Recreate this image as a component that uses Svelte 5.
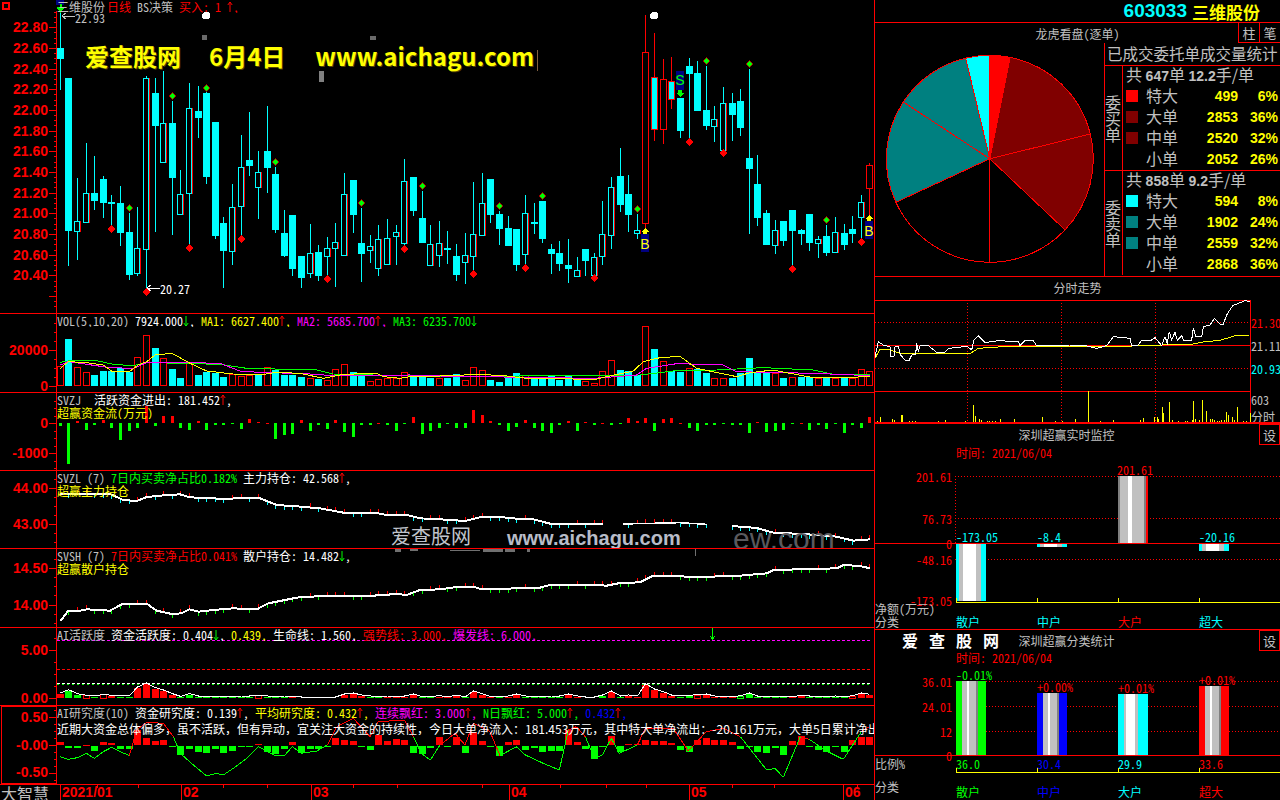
<script>
	const C = { gray: "#c0c0c0", white: "#fff", y: "#ff0", m: "#f0f", g: "#0f0", r: "#f00", b: "#00f", c: "#0ff" };

	const X = (i) => 60.3 + 8.613 * i;
	const px = (i) => Math.floor(X(i));
	const z = (v) => Math.round(v / 3);

	// high, body top, body bottom, low, kind (values in 3x zoomed pixels)
	const candles = [
		[40,145,177,270,"f"],[234,234,692,798,"f"],[534,664,692,780,"h"],[430,580,665,665,"h"],[468,580,603,630,"f"],
		[528,537,608,655,"f"],[585,606,611,680,"f"],[558,609,698,738,"f"],[640,696,825,840,"f"],[620,745,818,828,"h"],
		[228,235,748,870,"h"],[235,279,377,696,"f"],[213,370,485,485,"h"],[303,369,533,705,"f"],[510,583,641,641,"h"],
		[250,325,580,738,"h"],[258,333,353,414,"f"],[270,279,530,552,"f"],[366,366,707,716,"f"],[650,669,752,863,"f"],
		[552,622,752,795,"h"],[405,502,617,710,"h"],[336,480,497,528,"f"],[453,517,560,657,"h"],[318,453,503,578,"f"],
		[500,522,690,698,"f"],[630,699,767,770,"f"],[645,645,806,828,"f"],[768,768,833,863,"f"],[672,760,820,833,"h"],
		[735,756,827,843,"f"],[711,745,767,830,"h"],[668,727,745,860,"h"],[519,583,764,764,"h"],[540,540,644,698,"f"],
		[625,729,761,845,"f"],[705,739,749,790,"h"],[675,718,803,828,"h"],[657,715,791,795,"h"],[675,697,709,795,"h"],
		[478,544,730,740,"h"],[531,531,632,648,"f"],[572,654,728,728,"f"],[675,733,794,794,"h"],[663,730,764,800,"h"],
		[693,744,749,792,"f"],[732,768,825,843,"f"],[699,766,785,851,"h"],[546,703,767,815,"h"],[519,610,705,705,"h"],
		[537,537,645,669,"f"],[633,642,687,735,"f"],[648,684,738,738,"f"],[687,687,795,813,"f"],[585,640,762,797,"h"],
		[609,666,671,702,"f"],[603,603,717,729,"f"],[732,747,762,822,"f"],[723,759,792,813,"f"],[717,795,807,849,"f"],
		[771,811,827,827,"h"],[747,747,783,828,"f"],[759,771,825,825,"h"],[603,703,767,795,"h"],[531,562,705,747,"h"],
		[444,528,615,636,"f"],[525,582,645,696,"f"],[642,690,698,717,"h"],[45,157,670,690,"r"],[99,232,386,423,"x"],
		[177,238,386,432,"r"],[171,244,296,327,"x"],[294,294,393,414,"f"],[174,198,222,420,"f"],[183,219,333,333,"f"],
		[198,330,378,390,"f"],[318,358,377,426,"h"],[261,310,450,450,"h"],[279,309,345,423,"f"],[267,303,384,408,"f"],
		[207,474,507,702,"f"],[465,552,654,678,"f"],[630,639,735,735,"f"],[660,690,735,762,"h"],[663,663,723,738,"f"],
		[630,630,693,800,"f"],[687,690,702,735,"f"],[642,642,729,753,"f"],[708,717,729,774,"h"],[675,708,759,768,"f"],
		[651,696,756,756,"h"],[672,699,735,750,"f"],[648,687,702,729,"f"],[586,607,651,717,"h"],[490,495,563,650,"r"]
	];
	const redDots = [[6,688],[10,877],[15,745],[21,718],[31,838],[40,748],[48,823],[54,805],[62,835],[73,427],[77,460],[85,808],[93,727]];
	const greenDots = [[8,625],[13,289],[17,265],[25,487],[35,609],[42,559],[51,619],[56,589],[67,628],[75,184],[80,193],[89,661]];

	const volTops = [
		168,87,172,187,195,183,183,173,185,140,76,114,145,177,204,160,195,185,188,201,193,198,195,193,170,181,195,195,201,205,207,210,178,163,186,193,214,208,203,205,187,200,200,203,203,
		203,192,210,172,181,210,216,198,189,196,207,203,195,209,195,203,214,220,184,151,180,184,196,49,117,154,184,186,175,178,189,205,205,204,190,144,189,189,190,204,202,201,201,203,203,203,203,203,178,184
	];
	const volRed = new Set([0,2,3,9,10,12,15,20,21,22,24,29,31,32,33,36,37,38,39,40,44,47,48,49,54,61,62,63,64,68,70,73,76,77,83,85,88,90,92,93,94]);

	const join = (a, b) => [...a, ...b.map(([x, y]) => [x + 1320, y])];
	const points = (list, yo) => list.map(([x, y]) => `${x / 3},${yo + y / 3}`).join(" ");

	const maYellow = join(
		[[181,175],[205,155],[260,158],[310,165],[335,183],[390,183],[415,165],[440,155],[465,135],[515,130],[540,143],[570,160],[620,183],[700,192],[780,195],[830,187],[900,190],[970,205],[1030,193],[1130,190],[1150,200],[1200,205],[1240,198]],
		[[0,198],[120,193],[200,198],[260,205],[360,205],[460,210],[500,200],[580,183],[610,155],[660,143],[720,139],[770,175],[890,200],[930,188],[1000,180],[1050,190],[1120,203],[1230,203],[1290,198]]
	);
	const maPink = join(
		[[181,165],[205,155],[330,173],[400,175],[440,158],[530,157],[660,160],[720,183],[790,188],[900,190],[1000,197],[1230,195]],
		[[0,198],[120,200],[460,205],[590,195],[620,175],[710,161],[850,165],[890,185],[1120,190],[1290,197]]
	);
	const maGreen = join(
		[[181,157],[205,153],[290,152],[340,163],[400,167],[440,157],[530,160],[660,163],[740,175],[950,180],[1000,192]],
		[[0,200],[600,195],[700,183],[830,180],[970,173],[1120,180],[1180,193],[1290,193]]
	);

	const flow = [
		-10,-122,7,-20,-5,10,-14,-50,-24,-14,52,-10,22,22,-14,-22,7,-20,-5,-5,-1,-17,13,4,1,-47,-35,-32,10,-23,-5,-17,10,-26,-41,-5,-5,1,-5,-25,-1,19,-34,-23,-14,
		-3,-14,-14,38,25,7,-7,-23,-11,10,-14,-23,-31,-7,7,-25,4,-5,1,-7,-2,16,7,16,-23,13,16,1,-16,-25,-5,-7,-2,-5,-5,-31,4,-28,-25,-22,-2,1,-20,-7,-17,-2,-29,-7,-14,19
	];

	const mainLine = join(
		[[181,552],[330,552],[370,570],[410,573],[440,561],[490,556],[540,553],[570,562],[680,567],[730,563],[775,563],[830,585],[890,589],[960,595],[1030,608],[1130,609],[1160,615],[1220,615],[1260,625]],
		[[0,628],[75,633],[120,622],[180,621],[230,626],[280,628],[330,641],[490,643]]
	);
	const mainLine2 = [[550,642],[720,638],[800,643]].map(([x, y]) => [x + 1320, y]);
	const mainLine3 = [[875,648],[950,654],[1000,668],[1090,672],[1190,680],[1240,692],[1290,688]].map(([x, y]) => [x + 1320, y]);
	const retailLine = join(
		[[181,228],[205,197],[240,197],[260,193],[330,197],[365,178],[440,176],[470,197],[515,207],[545,205],[568,193],[595,200],[640,195],[700,190],[770,193],[805,175],[880,160],[910,155],[1120,152],[1190,147],[1220,150],[1260,135]],
		[[0,133],[50,126],[100,125],[125,133],[300,128],[330,120],[460,120],[500,122],[540,114],[600,112],[640,92],[720,93],[750,97],[900,92],[980,85],[1000,75],[1190,70],[1210,60],[1260,63],[1290,70]]
	);

	function yAt(list, x) {
		for (let k = 1; k < list.length; k++) {
			const [x0, y0] = list[k - 1];
			const [x1, y1] = list[k];
			if (x >= x0 && x <= x1) return y0 + ((y1 - y0) * (x - x0)) / (x1 - x0 || 1);
		}
		return null;
	}
	function marks(list, yo, downColor) {
		const out = [];
		candles.forEach((c, i) => {
			const y = yAt(list, X(i) * 3);
			if (y === null) return;
			const up = c[4] !== "f";
			out.push({ x: px(i) + 0.5, y1: yo + y / 3, y2: yo + y / 3 + (up ? -4 : 4), color: up ? C.r : downColor });
		});
		return out;
	}
	const mainMarks = [mainLine, mainLine2, mainLine3].flatMap((l) => marks(l, 310, C.c));
	const retailMarks = marks(retailLine, 545, C.g);

	const activity = [
		12,-22,-10,5,-3,8,5,-4,-4,30,42,28,21,10,-2,-10,-3,-3,-3,-1,-2,-3,-3,5,-3,-1,-3,3,0,0,0,0,0,9,12,6,-3,-1,3,3,3,9,-1,-1,4,
		1,5,-1,18,10,1,-1,3,9,-3,-1,-1,-3,-3,9,3,0,0,-6,18,-3,6,3,40,24,16,6,-3,-5,7,9,3,1,1,-4,-12,-3,-3,-3,-1,1,5,-3,-3,-1,-3,-1,4,12,8
	];
	const activityHollow = new Set([3,5,23,74,79,92]);
	const activityLine = activity.map((h, i) => `${px(i) + 0.5},${697 - Math.abs(h) / 3}`).join(" ");

	const study = [
		10,-5,-5,1,-14,9,6,-10,-10,45,22,12,14,-4,-26,-10,-17,-20,-10,-22,-14,-3,-3,3,-17,-23,-10,8,-22,-10,-10,-3,20,14,11,-4,-12,30,12,18,14,-20,-23,-5,25,
		-3,25,-22,40,12,-3,-30,10,14,-13,-5,-18,-15,-15,45,8,-10,-38,-2,26,-18,3,3,14,12,12,7,-13,-17,14,20,14,14,8,-10,-3,-17,-20,-5,-28,12,26,-4,-11,-17,-3,-17,14,24,24
	];
	const studyLine = join(
		[[181,635],[205,643],[232,638],[259,625],[283,640],[310,620],[335,607],[361,620],[388,632],[410,555],[440,532],[490,535],[520,575],[541,625],[580,660],[620,693],[650,685],[670,690],[700,670],[740,640],[775,605],[825,632],[853,632],[877,605],[904,625],[950,618],[982,600],[1010,545],[1060,520],[1110,575],[1135,530],[1213,525],[1240,575],[1264,625],[1291,645]],
		[[0,600],[45,565],[75,600],[100,535],[150,560],[180,632],[229,605],[256,630],[310,655],[358,675],[385,555],[409,545],[436,575],[463,640],[487,630],[514,580],[538,625],[592,600],[616,550],[700,550],[745,618],[799,560],[850,550],[901,575],[980,675],[1005,670],[1030,697],[1081,575],[1108,583],[1159,618],[1210,643],[1264,560],[1288,545]]
	);
	const studySegs = studyLine.slice(1).map((p, k) => ({
		a: studyLine[k],
		b: p,
		color: (p[1] + studyLine[k][1]) / 2 < 600 ? C.r : C.g
	}));

	// axis labels with y position
	const axes = {
		main: ["22.80","22.60","22.40","22.20","22.00","21.80","21.60","21.40","21.20","21.00","20.80","20.60","20.40"].map((t, i) => [t, 27.3 + i * 20.67]),
		vol: [["20000",350],["0",386]],
		zj: [["0",423],["-1000",453]],
		zl: [["44.00",488],["43.00",524]],
		sh: [["14.50",567.7],["14.00",604.5]],
		act: [["5.00",650],["0.00",698]],
		res: [["0.50",717],["-0.00",745],["-0.50",772]]
	};
	function ticks(list, top, bottom) {
		const step = list[1][1] - list[0][1];
		const out = [];
		const y0 = list[0][1];
		for (let k = -8; k < 64; k++) {
			const y = Math.round(y0 + (k * step) / 4);
			if (y > top + 1 && y < bottom) out.push({ y, major: k % 4 === 0 });
		}
		return out;
	}
	const panels = [
		{ key: "vol", top: 314, h: 79, a: axes.vol },
		{ key: "zj", top: 393, h: 78, a: axes.zj },
		{ key: "zl", top: 471, h: 78, a: axes.zl },
		{ key: "sh", top: 549, h: 79, a: axes.sh },
		{ key: "act", top: 628, h: 78, a: axes.act },
		{ key: "res", top: 706, h: 79, a: axes.res }
	];

	const mainHead = [["三维股份",C.gray],["日线 ",C.r,2],["BS决策 ",C.gray],["买入: 1 ",C.r],["^"],[",",C.r]];
	const volHead = [["VOL(5,10,20) ",C.gray],["7924.000",C.white],["v"],[", ",C.white],["MA1: 6627.400",C.y],["^"],[", ",C.y],["MA2: 5685.700",C.m],["^"],[", ",C.m],["MA3: 6235.700",C.g],["v"]];
	const zjHead = [["SVZJ  ",C.gray],["活跃资金进出: 181.452",C.white,1],["^"],[",",C.white]];
	const zlHead = [["SVZL (7) ",C.gray],["7日内买卖净占比0.182%",C.g],[" 主力持仓: 42.568",C.white],["^"],[",",C.white]];
	const shHead = [["SVSH (7) ",C.gray],["7日内买卖净占比0.041%",C.r],[" 散户持仓: 14.482",C.white],["v"],[",",C.white]];
	const actHead = [["AI活跃度 ",C.gray],["资金活跃度: 0.404",C.white],["v"],[", ",C.white],["0.439, ",C.y],["生命线: 1.560, ",C.white],["强势线: 3.000, ",C.r],["爆发线: 6.000,",C.m]];
	const resHead = [["AI研究度(10) ",C.gray],["资金研究度: 0.139",C.white],["^"],[", ",C.white],["平均研究度: 0.432",C.y],["^"],[", ",C.y],["连续飘红: 3.000",C.m],["^"],[", ",C.m],["N日飘红: 5.000",C.g],["^"],[", ",C.g],["0.432",C.b],["^"],[",",C.b]];

	const dateLabels = [["2021/01",60],["02",181],["03",311],["04",509],["05",689],["06",843]];
	const dateMinor = [97,138,223,267,353,397,482,560,606,646,732,774,857];
	const scraps = [[395,549,6,3],[410,549,8,2],[450,550,30,1],[483,549,20,3],[505,549,10,3],[527,549,3,3],[695,549,1,7]];

	// pie
	const buy = [[499,C.r],[2853,"#800000"],[2520,"#800000"],[2052,"#000"]];
	const sell = [[2868,"#000"],[2559,"#008080"],[1902,"#008080"],[594,C.c]];
	const R = 103.5;
	const CX = 989.8;
	const CY = 159.8;
	const polar = (a) => [CX + R * Math.sin((a * Math.PI) / 180), CY - R * Math.cos((a * Math.PI) / 180)];
	function slices(list, start) {
		const total = list.reduce((s, v) => s + v[0], 0);
		let a = start;
		return list.map(([v, fill]) => {
			const from = a;
			a += (v / total) * 180;
			const [x0, y0] = polar(from);
			const [x1, y1] = polar(a);
			return { d: `M${CX} ${CY}L${x0} ${y0}A${R} ${R} 0 0 1 ${x1} ${y1}Z`, fill };
		});
	}
	const pie = [...slices(buy, 0), ...slices(sell, 180)];

	const buyRows = [["特大","499","6%",C.r],["大单","2853","36%","#800000"],["中单","2520","32%","#800000"],["小单","2052","26%",""]];
	const sellRows = [["特大","594","8%",C.c],["大单","1902","24%","#008080"],["中单","2559","32%","#008080"],["小单","2868","36%",""]];

	const tsPrice = [[15,245],[25,200],[40,210],[60,215],[62,243],[72,243],[75,215],[85,215],[92,240],[105,255],[118,255],[125,240],[137,238],[140,205],[145,230],[150,212],[175,212],[200,232],[225,232],[235,220],[260,218],[290,213],[305,225],[312,195],[325,182],[345,203],[385,197],[445,200],[450,212],[465,197],[490,197],[500,213],[600,210],[640,210],[680,220],[710,212],[730,185],[780,190],[785,212],[805,210],[815,195],[845,195],[855,188],[875,212],[885,185],[892,205],[898,170],[905,195],[915,172],[922,195],[935,182],[940,195],[965,195],[970,160],[978,185],[995,185],[1000,155],[1020,150],[1033,130],[1050,147],[1060,147],[1070,120],[1088,92],[1125,77],[1140,80]];
	const tsAvg = [[15,250],[30,222],[60,225],[90,235],[130,236],[300,236],[325,220],[385,216],[730,215],[875,210],[965,208],[1000,201],[1050,196],[1100,181],[1140,180]];
	const tsVol = [[20,2],[31,14],[65,10],[72,7],[93,22],[97,22],[118,2],[125,4],[135,3],[205,2],[226,6],[285,2],[310,50],[316,18],[328,10],[334,5],[351,2],[358,2],[365,2],[375,2],[391,8],[433,10],[515,14],[555,3],[575,2],[616,10],[655,92],[690,3],[730,5],[810,5],[820,12],[853,14],[860,14],[865,8],[877,44],[880,28],[898,60],[905,5],[923,2],[945,3],[950,2],[965,6],[970,63],[975,10],[988,5],[997,66],[1009,32],[1021,8],[1027,8],[1033,5],[1040,3],[1047,4],[1054,5],[1061,7],[1068,30],[1075,20],[1085,16],[1092,6],[1102,44],[1120,3],[1128,2],[1140,28]];
	const tsPts = (list) => list.map(([x, y]) => `${870 + x / 3},${275 + y / 3}`).join(" ");

	const S = C.gray;
	const G = "#808080";
	const W = C.white;
	const coolStrip = [[0,3,C.c],[3,7,S],[7,20,W],[20,25,S],[25,30,C.c]];
	const netBars = [
		{ x: 956, y: 543, h: 57, strip: coolStrip, val: "-173.05", vy: 535, vc: C.c, name: "散户", nc: C.c },
		{ x: 1037, y: 543, h: 3, strip: coolStrip, val: "-8.4", vy: 535, vc: C.c, name: "中户", nc: C.c },
		{ x: 1118, y: 475, h: 67, strip: [[0,2,G],[2,10,S],[10,14,W],[14,26,S],[26,28,G],[28,30,C.r]], val: "201.61", vy: 468, vc: C.r, name: "大户", nc: C.r },
		{ x: 1199, y: 543, h: 7, strip: coolStrip, val: "-20.16", vy: 535, vc: C.c, name: "超大", nc: C.c }
	];
	const warm = (c) => [[0,6,c],[6,11,S],[11,13,W],[13,20,S],[20,22,G],[22,30,c]];
	const shareBars = [
		{ x: 956, y: 681, strip: warm(C.g), pct: "-0.01%", py: 674, pc: C.g, val: "36.0", name: "散户", c: C.g },
		{ x: 1037, y: 693, strip: warm(C.b), pct: "+0.00%", py: 686, pc: C.r, val: "30.4", name: "中户", c: C.b },
		{ x: 1118, y: 694, strip: [[0,6,C.c],[6,8,S],[8,17,W],[17,20,S],[20,30,C.c]], pct: "+0.01%", py: 687, pc: C.r, val: "29.9", name: "大户", c: C.c },
		{ x: 1199, y: 686, strip: warm(C.r), pct: "+0.01%", py: 679, pc: C.r, val: "33.6", name: "超大", c: C.r }
	];
</script>

{#snippet line(segs)}
	<div class="hline">
		{#each segs as s}
			{#if s[0] === "^"}
				<svg class="arr up" width="6" height="12" viewBox="0 0 6 12"><path d="M3 1V11M.8 4L3 1L5.2 4" /></svg>
			{:else if s[0] === "v"}
				<svg class="arr dn" width="6" height="12" viewBox="0 0 6 12"><path d="M3 1V11M.8 8L3 11L5.2 8" /></svg>
			{:else}
				<span style="color:{s[1]};margin-left:{s[2] || 0}px">{s[0]}</span>
			{/if}
		{/each}
	</div>
{/snippet}

{#snippet axis(list, top, bottom)}
	{#each ticks(list, top, bottom) as t}
		<rect x={t.major ? 49 : 54} y={t.y} width={t.major ? 7 : 2} height="1" fill={C.r} />
	{/each}
	{#each list as [t, y]}
		<text class="ax" x="48" {y} text-anchor="end">{t}</text>
	{/each}
{/snippet}

{#snippet strips(b, h)}
	{#each b.strip as [from, to, c]}
		<rect x={b.x + from} y={b.y} width={to - from} height={h} fill={c} />
	{/each}
{/snippet}

<div class="screen">
	<div class="left">
		<section class="panel main">
			<svg width="874" height="313" viewBox="0 0 874 313">
				<rect x="3" y="3" width="6" height="6" fill="none" stroke={C.r} stroke-width="2" />
				{@render axis(axes.main, 10, 312)}
				{#each candles as c, i}
					{@const x = px(i)}
					{@const color = c[4] === "r" || c[4] === "x" ? C.r : C.c}
					<rect x={x} y={z(c[0])} width="1" height={z(c[3]) - z(c[0])} fill={color} />
					{#if c[4] === "f"}
						<rect x={x - 3} y={z(c[1])} width="7" height={Math.max(1, z(c[2]) - z(c[1]))} fill={C.c} />
					{:else if c[4] === "h"}
						<rect x={x + 3} y={z(c[1])} width="1" height={z(c[2]) - z(c[1]) + 1} fill={C.r} />
						<rect x={x - 2.5} y={z(c[1]) + 0.5} width="5" height={z(c[2]) - z(c[1])} fill="#000" stroke={C.c} />
					{:else if c[4] === "r"}
						<rect x={x - 2.5} y={z(c[1]) + 0.5} width="6" height={z(c[2]) - z(c[1])} fill="#000" stroke={C.r} />
					{:else}
						<rect x={x - 2.5} y={z(c[1]) + 0.5} width="6" height={z(c[2]) - z(c[1])} fill={C.c} stroke={C.r} />
					{/if}
				{/each}
				{#each redDots as [i, y]}
					<polygon points="{px(i) + 0.5},{z(y) - 4} {px(i) + 4.5},{z(y)} {px(i) + 0.5},{z(y) + 4} {px(i) - 3.5},{z(y)}" fill={C.r} />
				{/each}
				{#each greenDots as [i, y]}
					<polygon points="{px(i) + 0.5},{z(y) - 4} {px(i) + 4.5},{z(y)} {px(i) + 0.5},{z(y) + 4} {px(i) - 3.5},{z(y)}" fill="#900" />
					<polygon points="{px(i) + 0.5},{z(y) - 3} {px(i) + 3.5},{z(y)} {px(i) + 0.5},{z(y) + 3} {px(i) - 2.5},{z(y)}" fill={C.g} />
				{/each}

				<rect x="202" y="35" width="5" height="5" fill="#6a6a6a" />
				<rect x="370" y="36" width="6" height="4" fill="#6a6a6a" />
				<rect x="319" y="71" width="5" height="11" fill="#808080" />
				<rect x="537" y="50" width="1" height="21" fill="#806040" />
				{#each [206, 654] as x}
					<polygon points="{x - 2},12 {x + 2},12 {x + 4},14 {x + 4},18 {x + 2},19 {x - 2},19 {x - 4},18 {x - 4},14" fill={C.white} />
				{/each}

				<rect x="56" y="0" width="8" height="5" fill="#000080" />
				<path d="M60.5 4V11M57.5 7.5L60.5 11L63.5 7.5" stroke={C.g} stroke-width="2" fill="none" />
				<path d="M62 16H75M62 16L66 13M62 16L66 19" stroke={C.gray} fill="none" />
				<text class="small" x="75" y="17" fill={C.gray}>22.93</text>
				<path d="M147 288H160M147 288L151 285M147 288L151 291" stroke={C.white} fill="none" />
				<text class="small" x="160" y="288.5" fill={C.white}>20.27</text>

				<rect x="641" y="234" width="8" height="18" fill="#000080" />
				<polygon points="645,228 649,232 647,232 647,234 643,234 643,232 641,232" fill={C.y} />
				<text class="mark" x="645" y="244" fill={C.y}>B</text>
				<rect x="865" y="221" width="8" height="18" fill="#000080" />
				<polygon points="869,215 873,219 871,219 871,221 867,221 867,219 865,219" fill={C.y} />
				<text class="mark" x="869" y="231" fill={C.y}>B</text>
				<rect x="676" y="71" width="8" height="19" fill="#000080" />
				<text class="mark" x="680" y="80" fill={C.g}>S</text>
				<polygon points="678,90 682,90 682,93 684,93 680,97 676,93 678,93" fill={C.g} />
			</svg>
			<div class="head">{@render line(mainHead)}</div>
			<div class="stamp">
				<span>爱查股网</span><span class="s2">6月4日</span><span class="s3">www.aichagu.com</span>
			</div>
		</section>

		{#each panels as p}
			<section class="panel" style="height:{p.h}px">
				<svg width="874" height={p.h - 1} viewBox="0 {p.top} 874 {p.h - 1}">
					{#if p.key === "res"}
						<rect x="1.5" y="706.5" width="55" height="77" fill="none" stroke={C.r} />
					{/if}
					{@render axis(p.a, p.top, p.top + p.h - 1)}

					{#if p.key === "vol"}
						{#each volTops as t, i}
							{#if volRed.has(i)}
								<rect x={px(i) - 2.5} y={310 + z(t) + 0.5} width="6" height={385 - 310 - z(t)} fill="none" stroke={C.r} />
							{:else}
								<rect x={px(i) - 3} y={310 + z(t)} width="7" height={386 - 310 - z(t)} fill={C.c} />
							{/if}
						{/each}
						<polyline points={points(maGreen, 310)} fill="none" stroke={C.g} />
						<polyline points={points(maPink, 310)} fill="none" stroke={C.m} />
						<polyline points={points(maYellow, 310)} fill="none" stroke={C.y} />
					{:else if p.key === "zj"}
						{#each flow as v, i}
							<rect x={px(i) - 1} y={v > 0 ? 423 - z(v) : 423} width="3" height={Math.max(1, z(Math.abs(v)))} fill={v > 0 ? C.r : C.g} />
						{/each}
					{:else if p.key === "zl"}
						{#each mainMarks as m}
							<line x1={m.x} x2={m.x} y1={m.y1} y2={m.y2} stroke={m.color} />
						{/each}
						<polyline points={points(mainLine, 310)} class="thick" />
						<polyline points={points(mainLine2, 310)} class="thin" />
						<polyline points={points(mainLine3, 310)} class="thick" />
						<text class="wm1" x="391" y="537">爱查股网</text>
						<text class="wm2" x="507" y="538">www.aichagu.com</text>
						<text class="wm3" x="733" y="538">ew.com</text>
					{:else if p.key === "sh"}
						{#each scraps as [x, y, w, h]}
							<rect {x} {y} width={w} height={h} fill="#707070" />
						{/each}
						{#each retailMarks as m}
							<line x1={m.x} x2={m.x} y1={m.y1} y2={m.y2} stroke={m.color} />
						{/each}
						<polyline points={points(retailLine, 545)} class="thick" />
					{:else if p.key === "act"}
						<line x1="57" x2="872" y1="640.5" y2="640.5" stroke={C.m} stroke-dasharray="3 2" />
						<line x1="57" x2="872" y1="669.5" y2="669.5" stroke={C.r} stroke-dasharray="3 2" />
						<line x1="57" x2="872" y1="683.5" y2="683.5" stroke={C.white} stroke-dasharray="3 2" />
						<line x1="57" x2="872" y1="684.5" y2="684.5" stroke={C.g} stroke-dasharray="2 3" />
						{#each activity as v, i}
							{#if activityHollow.has(i)}
								<rect x={px(i) - 2.5} y={698.5 - z(Math.abs(v)) - 1} width="6" height={z(Math.abs(v)) + 1} fill="none" stroke={v > 0 ? C.r : C.g} />
							{:else if v !== 0}
								<rect x={px(i) - 3} y={698 - Math.max(1, z(Math.abs(v)))} width="7" height={Math.max(1, z(Math.abs(v)))} fill={v > 0 ? C.r : C.g} />
							{/if}
						{/each}
						<polyline points={activityLine} fill="none" stroke={C.white} />
						<path d="M712.5 628V639M710 636L712.5 639L715 636" stroke={C.g} fill="none" />
					{:else if p.key === "res"}
						{#each study as v, i}
							<rect x={px(i) - 3} y={v > 0 ? 745 - z(v) : 746} width="7" height={Math.max(1, z(Math.abs(v)))} fill={v > 0 ? C.r : C.g} />
						{/each}
						{#each studySegs as s}
							<line x1={s.a[0] / 3} y1={545 + s.a[1] / 3} x2={s.b[0] / 3} y2={545 + s.b[1] / 3} stroke={s.color} />
						{/each}
					{/if}
				</svg>

				<div class="head">
					{#if p.key === "vol"}
						{@render line(volHead)}
					{:else if p.key === "zj"}
						{@render line(zjHead)}
						<div class="note">超赢资金流(万元)</div>
					{:else if p.key === "zl"}
						{@render line(zlHead)}
						<div class="note">超赢主力持仓</div>
					{:else if p.key === "sh"}
						{@render line(shHead)}
						<div class="note">超赢散户持仓</div>
					{:else if p.key === "act"}
						{@render line(actHead)}
					{:else}
						{@render line(resHead)}
						<div class="msg">近期大资金总体偏多，虽不活跃，但有异动，宜关注大资金的持续性，今日大单净流入：181.453万元，其中特大单净流出：-20.161万元，大单5日累计净出</div>
					{/if}
				</div>
			</section>
		{/each}

		<div class="dates">
			<span class="brand">大智慧</span>
			<svg width="874" height="15" viewBox="0 785 874 15">
				{#each dateLabels as [t, x]}
					<rect {x} y="785" width="1" height="15" fill={C.r} />
					<text class="date" x={x + 2} y="792">{t}</text>
				{/each}
				{#each dateMinor as x}
					<rect {x} y="785" width="1" height="3" fill={C.r} />
				{/each}
			</svg>
		</div>
	</div>

	<div class="right">
		<header class="quote"><span class="code">603033</span> <span class="name">三维股份</span></header>

		<section class="dragon">
			<div class="bar">
				<span class="bar-title">龙虎看盘(逐单)</span>
				<span class="cell">柱</span>
				<span class="cell">笔</span>
			</div>
			<div class="dragon-body">
				<svg width="229" height="233" viewBox="875 44 229 233">
					{#each pie as s}
						<path d={s.d} fill={s.fill} stroke={C.r} />
					{/each}
				</svg>
				<div class="stats">
					<div class="stats-head">已成交委托单成交量统计</div>
					<div class="side">
						<div class="side-label"><span>委</span><span>买</span><span>单</span></div>
						<div class="rows">
							<div class="total">共 <b>647</b>单 <b>12.2</b>手/单</div>
							{#each buyRows as r}
								<div class="row">
									<span class="swatch" style="background:{r[3]}"></span>
									<span>{r[0]}</span><b>{r[1]}</b><b>{r[2]}</b>
								</div>
							{/each}
						</div>
					</div>
					<div class="side last">
						<div class="side-label"><span>委</span><span>卖</span><span>单</span></div>
						<div class="rows">
							<div class="total">共 <b>858</b>单 <b>9.2</b>手/单</div>
							{#each sellRows as r}
								<div class="row">
									<span class="swatch" style="background:{r[3]}"></span>
									<span>{r[0]}</span><b>{r[1]}</b><b>{r[2]}</b>
								</div>
							{/each}
						</div>
					</div>
				</div>
			</div>
		</section>

		<section class="trend">
			<div class="title">分时走势</div>
			<svg width="405" height="122" viewBox="875 300 405 122">
				<rect x="875" y="300" width="375" height="1" fill={C.r} />
				<rect x="875" y="345" width="375" height="1" fill={C.r} />
				<rect x="875" y="391" width="375" height="1" fill={C.r} />
				<rect x="1250" y="300" width="1" height="122" fill={C.r} />
				{#each [322.5, 368.5] as y}
					<line x1="875" x2="1250" y1={y} y2={y} stroke={C.r} stroke-dasharray="1 2" />
				{/each}
				{#each [967.5, 1061.5, 1155.5] as x}
					<line x1={x} x2={x} y1="300" y2="422" stroke={C.r} stroke-dasharray="1 2" />
				{/each}
				{#each tsVol as [x, h]}
					<rect x={870 + z(x)} y={422 - z(h)} width="1" height={z(h)} fill={C.y} />
				{/each}
				<polyline points={tsPts(tsAvg)} fill="none" stroke={C.y} />
				<polyline points={tsPts(tsPrice)} fill="none" stroke={C.white} />
				<text x="1251" y="322" fill={C.r}>21.30</text>
				<text x="1251" y="345" fill={C.gray}>21.11</text>
				<text x="1251" y="368" fill={C.c}>20.93</text>
				<text x="1251" y="399" fill={C.gray}>603</text>
				<text x="1251" y="416" fill={C.gray}>分时</text>
			</svg>
		</section>

		<section class="monitor">
			<div class="bar tall">
				<span class="bar-title">深圳超赢实时监控</span>
				<span class="set">设</span>
			</div>
			<svg width="405" height="185" viewBox="875 444 405 185">
				<text x="956" y="451" fill={C.r}>时间: 2021/06/04</text>
				{#each [475.5, 517.5, 558.5] as y}
					<line x1="955" x2="1280" y1={y} y2={y} stroke={C.r} stroke-dasharray="1 2" />
				{/each}
				<line x1="955.5" x2="955.5" y1="475" y2="542" stroke={C.r} stroke-dasharray="1 2" />
				{#each [["201.61",475],["76.73",517],["0",542],["-48.16",558],["-173.05",599]] as [t, y]}
					<text x="952" {y} text-anchor="end" fill={C.r}>{t}</text>
				{/each}
				{#each netBars as b}
					{@render strips(b, b.h)}
					<text x={b.x + (b.val === "201.61" ? -1 : 0)} y={b.vy} fill={b.vc}>{b.val}</text>
					<text x={b.x} y="620" fill={b.nc}>{b.name}</text>
					<rect x={b.x} y="597" width="1" height="4" fill={C.y} />
				{/each}
				<rect x="875" y="542" width="405" height="1" fill={C.r} />
				<rect x="956" y="601" width="324" height="1" fill={C.y} />
				<text x="875" y="607" fill={C.gray}>净额(万元)</text>
				<text x="875" y="620" fill={C.gray}>分类</text>
			</svg>
		</section>

		<section class="category">
			<div class="bar tall">
				<span class="brand-name">爱 查 股 网</span>
				<span class="bar-title">深圳超赢分类统计</span>
				<span class="set">设</span>
			</div>
			<svg width="405" height="149" viewBox="875 651 405 149">
				<text x="956" y="657" fill={C.r}>时间: 2021/06/04</text>
				{#each [681.5, 706.5, 731.5] as y}
					<line x1="956" x2="1280" y1={y} y2={y} stroke={C.r} stroke-dasharray="1 2" />
				{/each}
				{#each [["36.01",681],["24.01",706],["12",731],["0",755]] as [t, y]}
					<text x="952" {y} text-anchor="end" fill={C.r}>{t}</text>
				{/each}
				{#each shareBars as b}
					{@render strips(b, 755 - b.y)}
					<text x={b.x} y={b.py} fill={b.pc}>{b.pct}</text>
					<text x={b.x} y="763" fill={b.c}>{b.val}</text>
					<text x={b.x} y="791" fill={b.c}>{b.name}</text>
					<rect x={b.x} y="768" width="1" height="5" fill={C.y} />
				{/each}
				<rect x="875" y="755" width="405" height="1" fill={C.r} />
				<rect x="956" y="772" width="324" height="1" fill={C.y} />
				<text x="875" y="763" fill={C.gray}>比例%</text>
				<text x="875" y="786" fill={C.gray}>分类</text>
			</svg>
		</section>
	</div>
</div>

<style>
	:global(body) {
		background: #000;
	}
	.screen {
		display: flex;
		width: 1280px;
		height: 800px;
		overflow: hidden;
		background: #000;
		color: #c0c0c0;
		font-family: "Noto Sans CJK SC", monospace;
		font-size: 12px;
		line-height: 13px;
		font-feature-settings: "hwid";
	}
	svg {
		display: block;
		shape-rendering: crispEdges;
	}
	svg text {
		dominant-baseline: central;
	}
	.left {
		position: relative;
		width: 874px;
		border-right: 1px solid #f00;
		flex: none;
	}
	.left::before {
		content: "";
		position: absolute;
		left: 56px;
		top: 11px;
		bottom: 16px;
		width: 1px;
		background: #f00;
		z-index: 2;
	}
	.panel {
		position: relative;
		border-bottom: 1px solid #f00;
		box-sizing: border-box;
		overflow: hidden;
	}
	.main {
		height: 314px;
	}
	.head {
		position: absolute;
		left: 57px;
		top: 0;
		width: 817px;
		overflow: hidden;
		white-space: nowrap;
	}
	.hline {
		display: flex;
		height: 13px;
		align-items: center;
	}
	.hline span {
		white-space: pre;
	}
	.note {
		color: #ff0;
	}
	.msg {
		margin-top: 3px;
		color: #fff;
		font-feature-settings: normal;
	}
	.arr {
		flex: none;
		fill: none;
		shape-rendering: auto;
	}
	.arr.up {
		stroke: #f00;
	}
	.arr.dn {
		stroke: #0f0;
	}
	.ax {
		font: bold 14px "Liberation Sans", sans-serif;
		fill: #f00;
	}
	.small {
		font-size: 12px;
	}
	.mark {
		font: 14px "Liberation Sans", sans-serif;
		text-anchor: middle;
	}
	.stamp {
		position: absolute;
		left: 85px;
		top: 39px;
		display: flex;
		color: #ff0;
		font-size: 24px;
		line-height: 34px;
		font-weight: 700;
		font-feature-settings: normal;
		text-shadow: 1px 1px 0 #554400;
		white-space: nowrap;
	}
	.s2 {
		margin-left: 28px;
	}
	.s3 {
		margin-left: 30px;
	}
	.thick {
		fill: none;
		stroke: #fff;
		stroke-width: 2;
	}
	.thin {
		fill: none;
		stroke: #fff;
		stroke-width: 1.5;
	}
	.wm1 {
		font: 20px "Liberation Serif", "Noto Sans CJK SC", serif;
		fill: #c0c4cc;
	}
	.wm2 {
		font: bold 20px "Liberation Sans", sans-serif;
		fill: #b8bcc8;
	}
	.wm3 {
		font: 30px "Liberation Sans", sans-serif;
		fill: #5a5a5e;
	}
	.dates {
		position: relative;
		height: 15px;
	}
	.brand {
		position: absolute;
		left: 1px;
		top: 0;
		font-size: 16px;
		line-height: 16px;
		color: #c0c0c0;
	}
	.date {
		font: bold 14px "Liberation Sans", sans-serif;
		fill: #f00;
	}
	.right {
		flex: 1;
		display: flex;
		flex-direction: column;
		min-width: 0;
	}
	.quote {
		height: 22px;
		box-sizing: border-box;
		display: flex;
		align-items: center;
		justify-content: flex-end;
		gap: 5px;
		padding-right: 20px;
		font-weight: 700;
		font-feature-settings: normal;
	}
	.code {
		color: #0ff;
		font: bold 19px "Liberation Sans", sans-serif;
	}
	.name {
		color: #ff0;
		font-size: 17px;
	}
	.dragon {
		border-top: 1px solid #f00;
		border-bottom: 1px solid #f00;
		height: 255px;
		box-sizing: border-box;
	}
	.bar {
		position: relative;
		display: flex;
		justify-content: flex-end;
		height: 20px;
	}
	.bar.tall {
		height: 21px;
	}
	.bar-title {
		position: absolute;
		left: 0;
		right: 0;
		top: 4px;
		text-align: center;
	}
	.tall .bar-title {
		right: 22px;
		top: 4px;
	}
	.cell {
		position: relative;
		width: 20px;
		border-left: 1px solid #f00;
		border-bottom: 1px solid #f00;
		text-align: center;
		line-height: 20px;
		font-size: 13px;
	}
	.set {
		position: absolute;
		right: 0;
		top: 0;
		width: 19px;
		height: 19px;
		border: 1px solid #f00;
		text-align: center;
		line-height: 19px;
		font-size: 13px;
	}
	.dragon-body {
		display: flex;
		height: 233px;
	}
	.stats {
		width: 176px;
		box-sizing: border-box;
		border-left: 1px solid #f00;
	}
	.stats-head {
		height: 22px;
		border-bottom: 1px solid #f00;
		font-size: 15.5px;
		line-height: 21px;
		white-space: nowrap;
		padding-left: 2px;
	}
	.side {
		display: flex;
		height: 105px;
		box-sizing: border-box;
		border-bottom: 1px solid #f00;
	}
	.side.last {
		border-bottom: 0;
		height: 104px;
	}
	.side-label {
		width: 18px;
		flex: none;
		box-sizing: border-box;
		border-right: 1px solid #f00;
		display: flex;
		flex-direction: column;
		justify-content: center;
		font-size: 16px;
		line-height: 16px;
	}
	.rows {
		margin-top: -2px;
		padding-left: 3px;
		font-size: 16px;
		font-feature-settings: normal;
	}
	.total {
		height: 21px;
		line-height: 21px;
		white-space: nowrap;
	}
	.total b {
		font: bold 14px "Liberation Sans", sans-serif;
	}
	.row {
		display: grid;
		grid-template-columns: 20px 32px 60px 40px;
		align-items: center;
		height: 21px;
		line-height: 21px;
	}
	.row b {
		text-align: right;
		color: #ff0;
		font: bold 14px "Liberation Sans", sans-serif;
	}
	.swatch {
		width: 12px;
		height: 12px;
	}
	.trend {
		height: 146px;
		box-sizing: border-box;
	}
	.title {
		height: 23px;
		line-height: 21px;
		text-align: center;
	}
	.trend svg text,
	.monitor svg text,
	.category svg text {
		font-size: 12px;
	}
	.monitor {
		border-top: 2px solid #f00;
		margin-top: -1px;
		box-sizing: border-box;
		height: 208px;
		border-bottom: 1px solid #f00;
	}
	.category {
		flex: 1;
	}
	.brand-name {
		position: absolute;
		left: 27px;
		top: 2px;
		font-size: 16px;
		line-height: 17px;
		font-weight: 700;
		color: #fff;
		white-space: pre;
		letter-spacing: 1.5px;
	}
</style>
